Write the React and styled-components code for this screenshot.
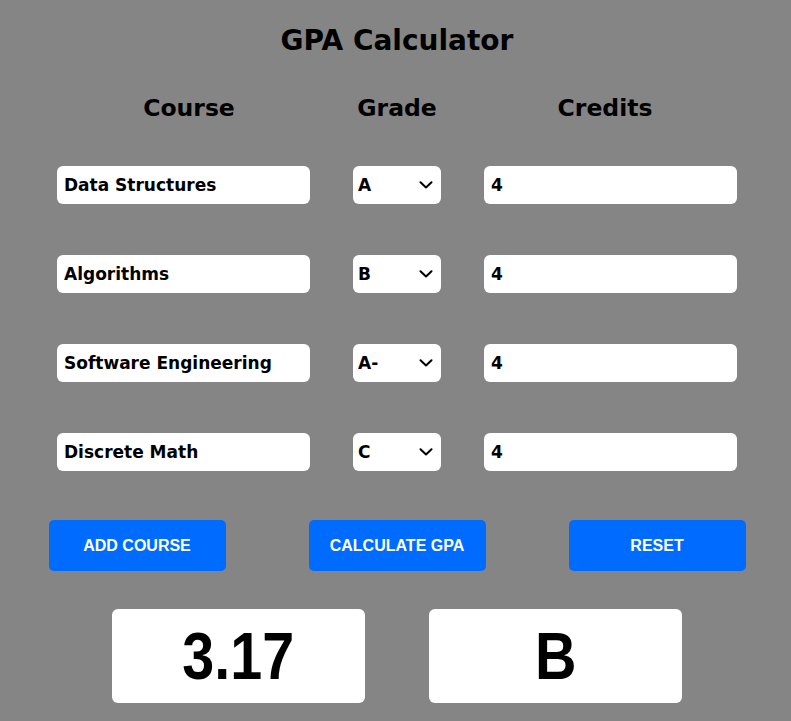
import React, { useState } from 'react';
import styled, { createGlobalStyle } from 'styled-components';

const GlobalStyle = createGlobalStyle`
  html, body {
    margin: 0;
    padding: 0;
    background: #858585;
  }
  body {
    font-family: "DejaVu Sans", "Liberation Sans", sans-serif;
  }
`;

const Page = styled.div`
  width: 791px;
  min-height: 721px;
  display: flex;
  flex-direction: column;
  align-items: center;
  padding-left: 3px;
  box-sizing: border-box;
`;

const Title = styled.h1`
  margin: 21px 0 0;
  font-size: 28px;
  line-height: 40px;
  font-weight: 700;
  color: #000;
`;

const HeaderRow = styled.div`
  display: grid;
  grid-template-columns: repeat(3, 208px);
  margin-top: 29px;
`;

const Heading = styled.h2`
  margin: 0;
  text-align: center;
  font-size: 23.5px;
  line-height: 36px;
  font-weight: 700;
  color: #000;
`;

const Rows = styled.div`
  display: flex;
  flex-direction: column;
  gap: 51px;
  margin-top: 40px;
`;

const Row = styled.div`
  display: grid;
  grid-template-columns: 253px 88px 253px;
  column-gap: 43px;
`;

const TextField = styled.input`
  height: 38px;
  box-sizing: border-box;
  border: none;
  border-radius: 6px;
  background: #fff;
  padding: 0 7px;
  font-family: "DejaVu Sans", "Liberation Sans", sans-serif;
  font-size: 17px;
  font-weight: 700;
  color: #000;
  outline: none;
`;

const SelectWrap = styled.div`
  position: relative;
  height: 38px;
`;

const GradeSelect = styled.select`
  appearance: none;
  width: 100%;
  height: 38px;
  box-sizing: border-box;
  border: none;
  border-radius: 6px;
  background: #fff;
  padding: 0 5px;
  font-family: "DejaVu Sans", "Liberation Sans", sans-serif;
  font-size: 17px;
  font-weight: 700;
  color: #000;
  outline: none;
`;

const Chevron = styled.svg`
  position: absolute;
  right: 8px;
  top: 15px;
  width: 14px;
  height: 8px;
  pointer-events: none;
`;

const Buttons = styled.div`
  display: grid;
  grid-template-columns: repeat(3, 177px);
  column-gap: 83px;
  margin-top: 49px;
`;

const Button = styled.button`
  height: 51px;
  border: none;
  border-radius: 5px;
  background: #006cff;
  color: #fff;
  font-family: "Liberation Sans", Arial, sans-serif;
  font-size: 16px;
  font-weight: 700;
  text-transform: uppercase;
  cursor: pointer;
  padding: 0;
`;

const Results = styled.div`
  display: grid;
  grid-template-columns: repeat(2, 253px);
  column-gap: 64px;
  margin-top: 38px;
`;

const ResultBox = styled.div`
  height: 94px;
  border-radius: 6px;
  background: #fff;
  display: flex;
  align-items: center;
  justify-content: center;
  font-family: "Liberation Sans", Arial, sans-serif;
  font-size: 66px;
  font-weight: 700;
  color: #000;
`;

const ResultText = styled.span`
  display: inline-block;
  transform: scaleX(0.87);
  white-space: nowrap;
`;

const grades = ['A', 'A-', 'B+', 'B', 'B-', 'C+', 'C', 'C-', 'D', 'F'];

const initialCourses = [
  { name: 'Data Structures', grade: 'A', credits: '4' },
  { name: 'Algorithms', grade: 'B', credits: '4' },
  { name: 'Software Engineering', grade: 'A-', credits: '4' },
  { name: 'Discrete Math', grade: 'C', credits: '4' },
];

export default function App() {
  const [courses, setCourses] = useState(initialCourses);

  const update = (i, key, value) => {
    setCourses(courses.map((c, j) => (j === i ? { ...c, [key]: value } : c)));
  };

  return (
    <>
      <GlobalStyle />
      <Page>
        <Title>GPA Calculator</Title>
        <HeaderRow>
          <Heading>Course</Heading>
          <Heading>Grade</Heading>
          <Heading>Credits</Heading>
        </HeaderRow>
        <Rows>
          {courses.map((c, i) => (
            <Row key={i}>
              <TextField value={c.name} onChange={(e) => update(i, 'name', e.target.value)} />
              <SelectWrap>
                <GradeSelect value={c.grade} onChange={(e) => update(i, 'grade', e.target.value)}>
                  {grades.map((g) => (
                    <option key={g} value={g}>{g}</option>
                  ))}
                </GradeSelect>
                <Chevron viewBox="0 0 14 8" fill="none">
                  <path d="M1.5 1.2 L7 6.5 L12.5 1.2" stroke="#000" strokeWidth="2" strokeLinecap="round" strokeLinejoin="round" />
                </Chevron>
              </SelectWrap>
              <TextField value={c.credits} onChange={(e) => update(i, 'credits', e.target.value)} />
            </Row>
          ))}
        </Rows>
        <Buttons>
          <Button>Add Course</Button>
          <Button>Calculate GPA</Button>
          <Button>Reset</Button>
        </Buttons>
        <Results>
          <ResultBox><ResultText>3.17</ResultText></ResultBox>
          <ResultBox><ResultText>B</ResultText></ResultBox>
        </Results>
      </Page>
    </>
  );
}
